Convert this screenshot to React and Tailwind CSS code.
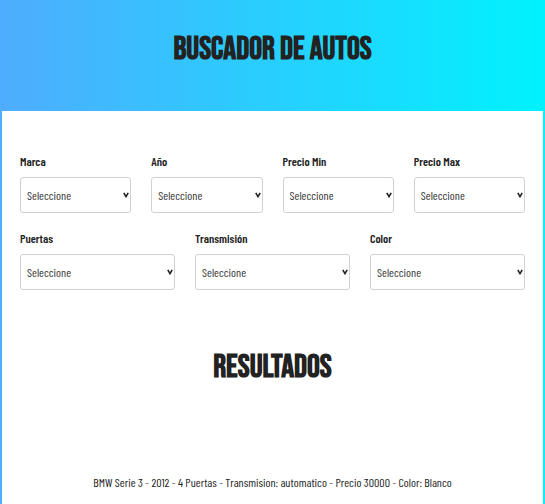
const rows = [
  {
    grid: "grid grid-cols-4 gap-5",
    fields: [
      { id: "marca", label: "Marca" },
      { id: "year", label: "Año" },
      { id: "minimo", label: "Precio Min" },
      { id: "maximo", label: "Precio Max" },
    ],
  },
  {
    grid: "grid grid-cols-3 gap-5",
    fields: [
      { id: "puertas", label: "Puertas" },
      { id: "transmision", label: "Transmisión" },
      { id: "color", label: "Color" },
    ],
  },
];

function Field({ id, label }) {
  return (
    <div className="flex min-w-0 flex-col gap-2">
      <label htmlFor={id} className="text-xs leading-4 font-semibold">
        {label}
      </label>
      <div className="grid items-center">
        <select
          id={id}
          className="col-start-1 row-start-1 h-9 w-full appearance-none rounded-[3px] border border-[#d1d1d1] bg-white pr-4 pl-1.5 text-xs text-[#333]"
        >
          <option>Seleccione</option>
        </select>
        <svg
          viewBox="0 0 6 6"
          className="pointer-events-none col-start-1 row-start-1 mr-0.5 h-1.5 w-1.5 justify-self-end"
          fill="none"
          stroke="#222"
          strokeWidth="1.6"
          aria-hidden="true"
        >
          <path d="M0.8 0.8 L3 4.6 L5.2 0.8" />
        </svg>
      </div>
    </div>
  );
}

export default function App() {
  return (
    <div className="min-h-screen bg-linear-to-r/srgb from-[#4facfe] to-[#00f2fe] px-0.5 font-['Barlow_Condensed','Roboto_Condensed','Liberation_Sans',sans-serif] text-[#222]">
      <header className="flex h-[111px] items-center justify-center pb-3">
        <h1 className="font-['Bebas_Neue','Roboto_Condensed',sans-serif] text-[32px] leading-10 font-bold uppercase">
          Buscador de Autos
        </h1>
      </header>
      <main className="min-h-[calc(100vh-111px)] bg-white px-[18px] pt-[42px]">
        <form className="flex flex-col gap-[17px]">
          {rows.map((row) => (
            <div key={row.grid} className={row.grid}>
              {row.fields.map((field) => (
                <Field key={field.id} {...field} />
              ))}
            </div>
          ))}
        </form>
        <h2 className="mt-[58px] text-center font-['Bebas_Neue','Roboto_Condensed',sans-serif] text-[32px] leading-10 font-bold uppercase">
          Resultados
        </h2>
        <p className="mt-[84px] text-center text-xs leading-5">
          BMW Serie 3 - 2012 - 4 Puertas - Transmision: automatico - Precio 30000 - Color: Blanco
        </p>
      </main>
    </div>
  );
}
